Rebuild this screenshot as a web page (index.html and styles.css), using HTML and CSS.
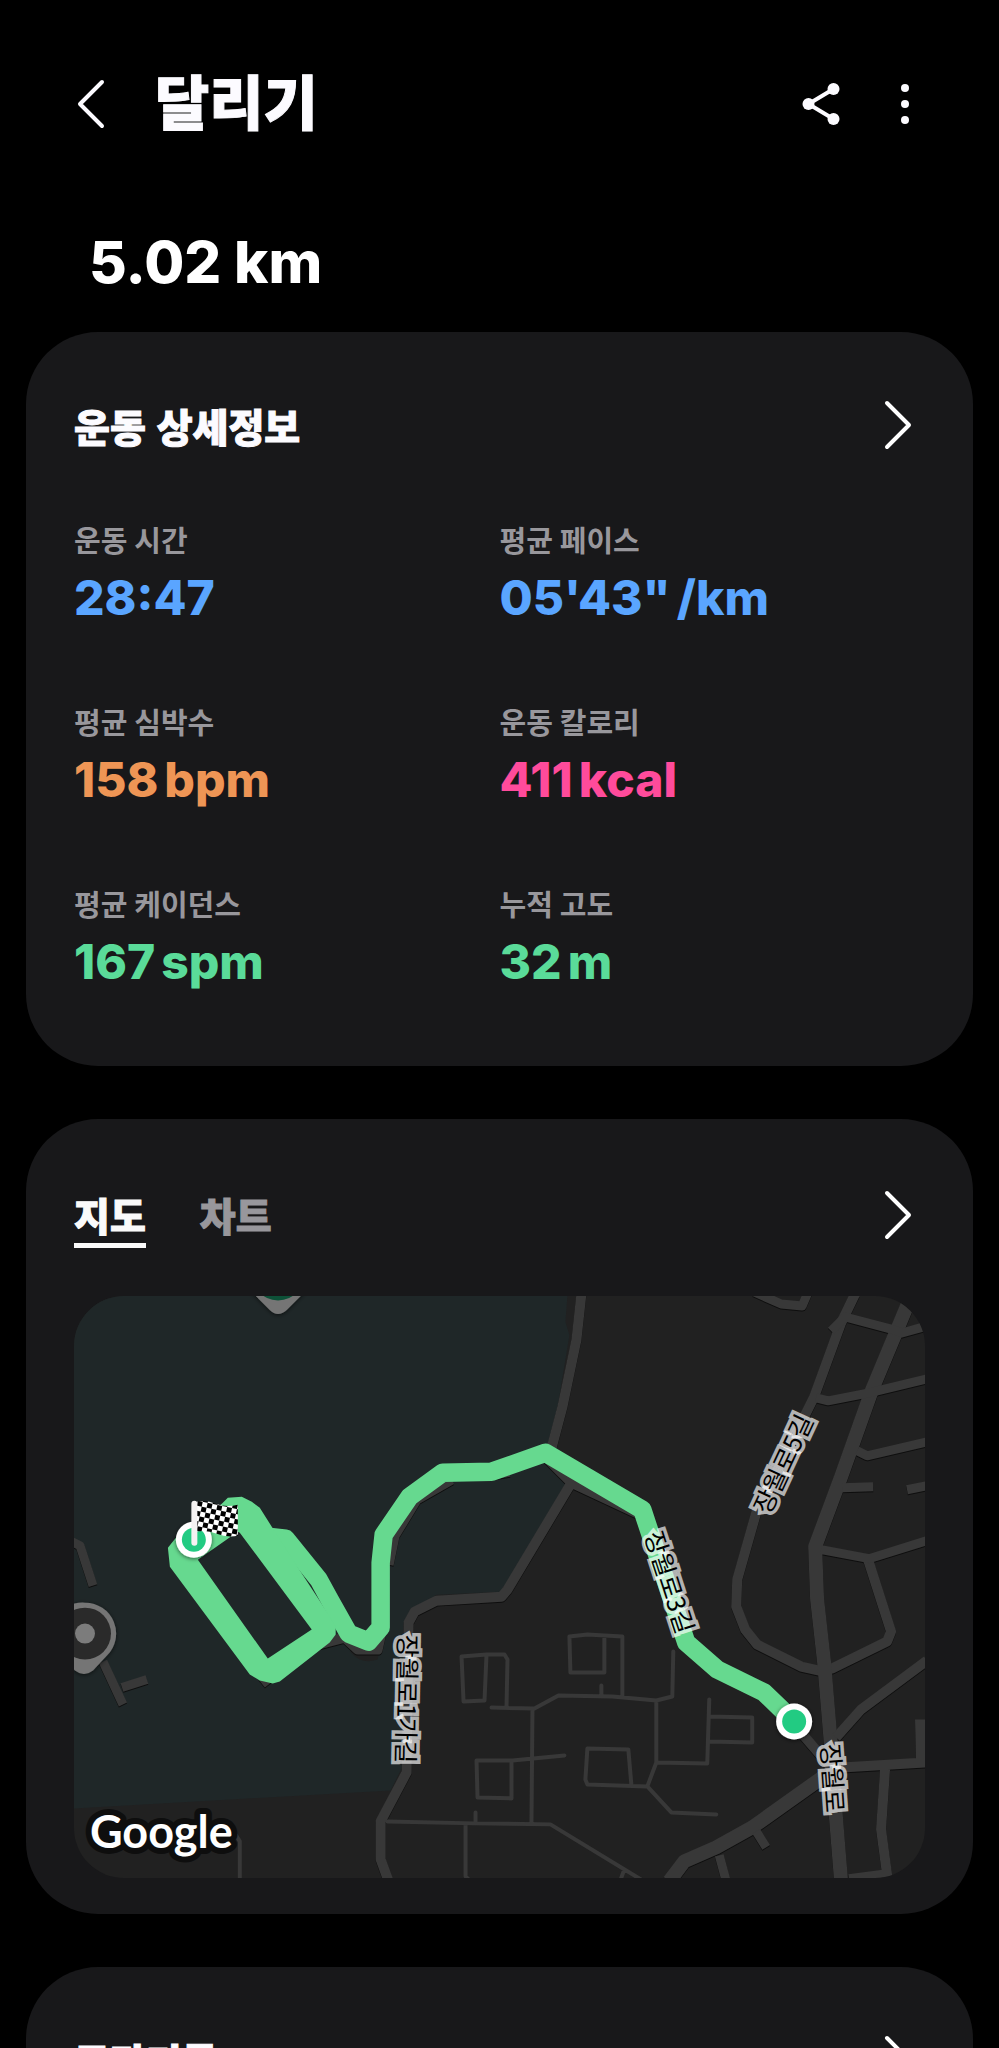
FILE: index.html
```html
<!DOCTYPE html>
<html lang="ko">
<head>
<meta charset="utf-8">
<meta name="viewport" content="width=device-width, initial-scale=1">
<title>달리기</title>
<link rel="stylesheet" href="styles.css">
</head>
<body>
<div class="screen">
  <header class="topbar">
    <button class="icon-btn" type="button" aria-label="뒤로">
      <svg width="32" height="56" viewBox="0 0 32 56" fill="none" stroke="#fcfbff" stroke-width="4" stroke-linecap="round" stroke-linejoin="round"><path d="M28 6 6 28l22 22"/></svg>
    </button>
    <h1 class="title">달리기</h1>
    <button class="icon-btn" type="button" aria-label="공유">
      <svg width="44" height="48" viewBox="0 0 44 48" fill="#fcfbff"><path d="M34.500 9 9.500 24l25 15" fill="none" stroke="#fcfbff" stroke-width="4"/><circle cx="34.500" cy="9" r="6"/><circle cx="9.500" cy="24" r="6"/><circle cx="34.500" cy="39" r="6"/></svg>
    </button>
    <button class="icon-btn" type="button" aria-label="더보기">
      <svg width="16" height="48" viewBox="0 0 16 48" fill="#fcfbff"><circle cx="8" cy="8" r="4"/><circle cx="8" cy="24" r="4"/><circle cx="8" cy="40" r="4"/></svg>
    </button>
  </header>

  <main>
    <p class="distance">5.02 km</p>

    <section class="card details">
      <div class="card-head">
        <h2 class="card-title">운동 상세정보</h2>
        <a class="more" href="#details" aria-label="운동 상세정보 보기"><svg width="32" height="56" viewBox="0 0 32 56"><path d="M4 6l22 22L4 50"/></svg></a>
      </div>
      <dl class="stats">
        <div class="stat"><dt>운동 시간</dt><dd class="blue">28:47</dd></div>
        <div class="stat"><dt>평균 페이스</dt><dd class="blue">05'43"<span class="unit">/km</span></dd></div>
        <div class="stat"><dt>평균 심박수</dt><dd class="orange">158<span class="unit">bpm</span></dd></div>
        <div class="stat"><dt>운동 칼로리</dt><dd class="pink">411<span class="unit">kcal</span></dd></div>
        <div class="stat"><dt>평균 케이던스</dt><dd class="green">167<span class="unit">spm</span></dd></div>
        <div class="stat"><dt>누적 고도</dt><dd class="green">32<span class="unit">m</span></dd></div>
      </dl>
    </section>

    <section class="card route">
      <div class="card-head">
        <div class="tabs" role="tablist">
          <button class="tab active" type="button" role="tab" aria-selected="true">지도</button>
          <button class="tab" type="button" role="tab" aria-selected="false">차트</button>
        </div>
        <a class="more" href="#map" aria-label="지도 보기"><svg width="32" height="56" viewBox="0 0 32 56"><path d="M4 6l22 22L4 50"/></svg></a>
      </div>
      <svg class="map" viewBox="74 1296 852 583" role="img" aria-label="달리기 경로 지도">
        <defs>
          <pattern id="check" width="10" height="10" patternUnits="userSpaceOnUse" patternTransform="translate(198 1501) rotate(12)">
            <rect width="10" height="10" fill="#fff"/><rect width="5" height="5"/><rect x="5" y="5" width="5" height="5"/>
          </pattern>
          <filter id="shadow" x="-30%" y="-30%" width="160%" height="160%"><feDropShadow dx="0" dy="1" stdDeviation="2" flood-opacity=".6"/></filter>
          <g id="roads" fill="none" stroke-linejoin="round">
            <path class="w10" d="M582 1294 577 1340 563 1407 549 1460 572 1483 508 1590 502 1597 437 1601 415 1612 409 1623 407 1773 381 1822V1860L389 1882M572 1483 645 1517"/>
            <path class="w10" d="M452 1480 417 1500 395 1536 389 1565M510 1472 492 1475M318 1645 345 1638 358 1650H378L382 1632M262 1684 272 1676"/>
            <path class="w10" d="M856 1294 842 1323 815 1397 757 1513 738 1580 737 1607 746 1630 758 1645 802 1667 820 1671 833 1669 888 1642 892 1632 869 1560"/>
            <path class="w14" d="M913 1294 873 1390 842 1477 816 1547 818 1600 825 1663 832 1747 837 1820 842 1882"/>
            <path class="w9" d="M832 1331 846 1317 895 1330 903 1333 928 1326M755 1292 782 1304 803 1306 809 1292M817 1398 829 1401 870 1393 928 1379M858 1451 868 1456 928 1442M843 1488 874 1487M908 1490 928 1486M822 1550 870 1559 928 1541"/>
            <path class="w10" d="M928 1661 862 1710 837 1738M795 1725 832 1768M843 1768 928 1763M921 1720 922 1763M886 1770 882 1830 888 1875 850 1880"/>
            <path class="w14" d="M826 1776 753 1828 717 1848 685 1862 670 1882"/>
            <path class="w9" d="M757 1832 767 1848M720 1856 727 1882M72 1542 80 1546 93 1586M103 1662 123 1705M122 1688 147 1680"/>
          </g>
        </defs>
        <rect x="74" y="1296" width="852" height="583" fill="#212121"/>
        <path d="M74 1296H568L566 1322 570 1335 552 1445 562 1480 568 1482 510 1590 500 1592 437 1595 410 1612 407 1640 404 1765 391 1791 74 1809Z" fill="#1f2728"/>
        <path d="M350 1652q12 14 28 8l4-20z" fill="#212121"/>
        <use href="#roads" class="road-edge"/>
        <use href="#roads" class="road"/>
        <path class="alley" d="M623 1697V1637L588 1635 570 1637 571 1673H605V1637M602 1686V1695M492 1708 535 1709 559 1696 613 1697 657 1701 673 1697 674 1652M533 1709 532 1824M657 1701V1763L648 1787 672 1813 717 1815M657 1763 708 1764 710 1700M710 1717 753 1718V1743L710 1742M648 1787 588 1785 586 1780 588 1749 629 1750 632 1785M565 1756 513 1761H477L478 1798 512 1799V1761M487 1655 462 1657 464 1702 485 1701 487 1655H505L508 1660 507 1708M388 1822 475 1824 551 1825 643 1881M625 1870 621 1881M476 1813V1824M466 1824V1877L470 1881M235 1834 240 1842V1881"/>

        <g filter="url(#shadow)">
          <path d="M85 1603a31 31 0 0 1 22 53l-14 15q-9 7-18 0l-14-15a31 31 0 0 1 24-53z" fill="#757575"/>
          <circle cx="85" cy="1634" r="26" fill="#2a2a2a"/>
          <circle cx="85" cy="1634" r="10" fill="#7c7c7c"/>
        </g>
        <g filter="url(#shadow)">
          <path d="M251 1291 270 1310q8 8 17 0L306 1291z" fill="#757575"/>
          <path d="M256 1290Q278 1311 301 1290z" fill="#0c5137"/>
        </g>

        <g fill="none" stroke="#66d98f" stroke-width="18.500" stroke-linejoin="round">
          <path d="M795 1722 765 1693 718 1670 687 1643 643 1510 546 1453 492 1472 443 1473 410 1497 384 1535 381 1563V1628L369 1642 349 1634 330 1600 319 1580 286 1539 268 1537"/>
        </g>
        <path fill="#66d98f" fill-rule="evenodd" d="M168 1548 170 1567 250 1675 260 1681 273 1684 280 1682 330 1643 336 1635V1627L327 1612 318 1598 293 1560 272 1527 260 1508 252 1502 242 1497 228 1498 222 1504 180 1533ZM238 1532 198 1560 268 1659 312 1630 240 1533Z"/>

        <g class="street">
          <text transform="translate(399 1635) rotate(91)">장월로1가길</text>
          <text transform="translate(645 1535) rotate(72)">장월로3길</text>
          <text transform="translate(770 1516) rotate(-65)">장월로5길</text>
          <text transform="translate(822 1745) rotate(86)">장월로</text>
        </g>

        <g filter="url(#shadow)"><circle cx="795" cy="1722" r="18" fill="#fff"/></g>
        <circle cx="795" cy="1722" r="12" fill="#22cb82"/>
        <g filter="url(#shadow)"><circle cx="194" cy="1540" r="18" fill="#fff"/></g>
        <circle cx="194" cy="1540" r="12" fill="#22cb82"/>
        <path d="M197 1502q9-2 19 2t22 1v31q-11 2-21-2t-20-2z" fill="url(#check)"/>
        <path d="M194.500 1504v39" stroke="#f4f2f2" stroke-width="6" stroke-linecap="round"/>
        <text class="brand" x="90" y="1849">Google</text>
      </svg>
    </section>

    <section class="card splits">
      <div class="card-head">
        <h2 class="card-title">구간기록</h2>
        <a class="more" href="#splits" aria-label="구간기록 보기"><svg width="32" height="56" viewBox="0 0 32 56"><path d="M4 6l22 22L4 50"/></svg></a>
      </div>
    </section>
  </main>
</div>
</body>
</html>
```

FILE: styles.css
```css
* { box-sizing: border-box; }

body {
  margin: 0;
  background: #000;
  color: #fcfbff;
  font-family: Inter, "Noto Sans CJK KR", sans-serif;
}

h1, h2, p, dl, dd { margin: 0; }

button {
  padding: 0;
  border: 0;
  background: none;
  color: inherit;
  font: inherit;
  cursor: pointer;
}

svg { display: block; }

.screen {
  height: 100vh;
  overflow-y: auto;
  scrollbar-width: none;
}

.topbar {
  display: flex;
  align-items: center;
  padding: 64px 86px 0 74px;
}

.title {
  flex: 1;
  margin-left: 49px;
  font-size: 59px;
  font-weight: 900;
  line-height: 80px;
  -webkit-text-stroke: 1px currentColor;
}

.topbar .icon-btn + .icon-btn { margin-left: 54px; }

.distance {
  padding: 78px 89px 30px;
  color: #fff;
  font-size: 58px;
  font-weight: 800;
  line-height: 80px;
}

.card {
  margin: 0 26px 53px;
  border-radius: 72px;
  background: #18181a;
}

.card-head {
  display: flex;
  align-items: flex-start;
  justify-content: space-between;
}

.card-title {
  font-family: "Noto Sans CJK KR", sans-serif;
  font-size: 39px;
  font-weight: 900;
  line-height: 60px;
  -webkit-text-stroke: 1px currentColor;
}

.more {
  margin-right: 10px;
  padding-top: 2px;
}

.more path {
  fill: none;
  stroke: #fff;
  stroke-width: 4;
  stroke-linecap: round;
  stroke-linejoin: round;
}

.details { padding: 63px 48px 76px; }

.stats {
  display: grid;
  grid-template-columns: 1fr 1fr;
  row-gap: 78px;
  margin-top: 67px;
}

.stat {
  display: flex;
  flex-direction: column;
  gap: 8px;
}

.stat dt {
  color: #98979c;
  font-size: 29px;
  font-weight: 700;
  line-height: 40px;
}

.stat dd {
  font-size: 48px;
  font-weight: 800;
  line-height: 56px;
}

.unit { margin-left: 6px; }

.blue { color: #5aa5ff; }
.orange { color: #ee9555; }
.pink { color: #ff4b9b; }
.green { color: #5adb99; }

.route { padding: 66px 48px 36px; }

.tabs {
  display: flex;
  gap: 54px;
}

.tab {
  border-bottom: 5px solid transparent;
  color: #98979c;
  font-family: "Noto Sans CJK KR", sans-serif;
  font-size: 39px;
  font-weight: 900;
  line-height: 58px;
  -webkit-text-stroke: 1px currentColor;
}

.tab.active {
  border-color: #fafafa;
  color: #fafafa;
}

.map {
  width: 100%;
  height: auto;
  margin-top: 48px;
  border-radius: 50px;
}

.w9 { stroke-width: 9px; }
.w10 { stroke-width: 10px; }
.w14 { stroke-width: 14px; }

.road-edge {
  stroke: #0e0e0e;
  transform: translate(0, 1px);
}

.road { stroke: #383838; }

.alley {
  fill: none;
  stroke: #383838;
  stroke-width: 4px;
  stroke-linecap: round;
  stroke-linejoin: round;
}

.street {
  fill: #000;
  stroke: rgba(255, 255, 255, .68);
  stroke-width: 7px;
  paint-order: stroke;
  font-family: "Noto Sans CJK KR", sans-serif;
  font-size: 25px;
}

.brand {
  fill: #fff;
  stroke: #0e0e0e;
  stroke-width: 12px;
  stroke-linejoin: round;
  paint-order: stroke;
  font-family: Lato, sans-serif;
  font-size: 45px;
  font-weight: 700;
}

.splits { padding: 63px 48px 76px; }
```
